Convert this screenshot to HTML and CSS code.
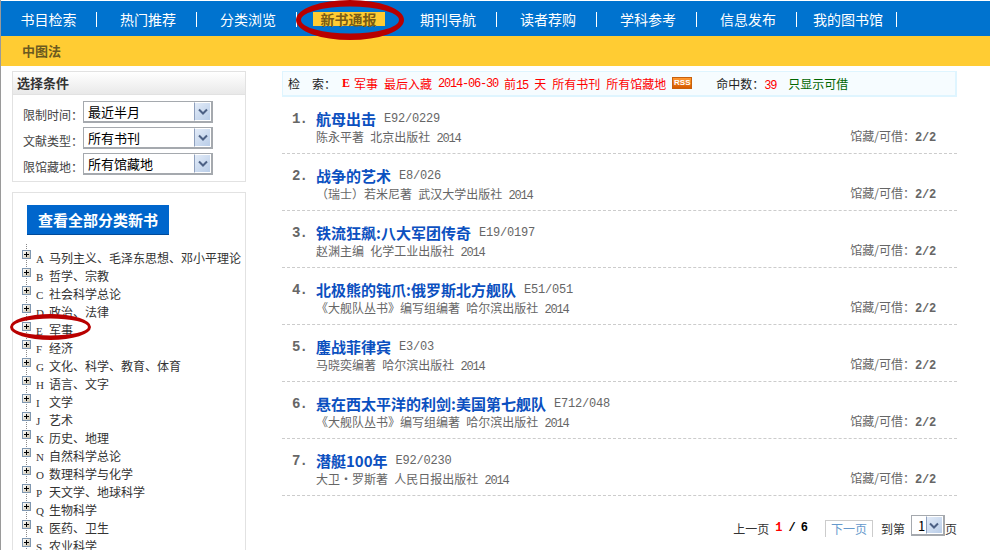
FILE: index.html
```html
<!DOCTYPE html>
<html lang="zh-CN">
<head>
<meta charset="utf-8">
<title>新书通报</title>
<link rel="stylesheet" href="styles.css">
</head>
<body>
<div class="page">
  <nav class="nav">
    <a class="nav-item">书目检索</a>
    <a class="nav-item">热门推荐</a>
    <a class="nav-item">分类浏览</a>
    <a class="nav-item nav-active"><span>新书通报</span></a>
    <a class="nav-item">期刊导航</a>
    <a class="nav-item">读者荐购</a>
    <a class="nav-item">学科参考</a>
    <a class="nav-item">信息发布</a>
    <a class="nav-item">我的图书馆</a>
  </nav>
  <div class="subnav"><b>中图法</b></div>
  <div class="main">
    <aside class="side">
      <section class="panel filter">
        <h3 class="panel-head">选择条件</h3>
        <div class="filter-body">
          <div class="filter-row"><label>限制时间：</label><div class="select"><span class="select-text">最近半月</span><span class="select-arrow"><svg width="10" height="7" viewBox="0 0 10 7"><path d="M1 1.5 5 5.5 9 1.5" fill="none" stroke="#4d6185" stroke-width="2"/></svg></span></div></div>
          <div class="filter-row"><label>文献类型：</label><div class="select"><span class="select-text">所有书刊</span><span class="select-arrow"><svg width="10" height="7" viewBox="0 0 10 7"><path d="M1 1.5 5 5.5 9 1.5" fill="none" stroke="#4d6185" stroke-width="2"/></svg></span></div></div>
          <div class="filter-row"><label>限馆藏地：</label><div class="select"><span class="select-text">所有馆藏地</span><span class="select-arrow"><svg width="10" height="7" viewBox="0 0 10 7"><path d="M1 1.5 5 5.5 9 1.5" fill="none" stroke="#4d6185" stroke-width="2"/></svg></span></div></div>
        </div>
      </section>
      <section class="panel cats">
        <a class="all-btn">查看全部分类新书</a>
        <ul class="tree">
          <li><i class="plus"></i><span class="let">A</span>马列主义、毛泽东思想、邓小平理论</li>
          <li><i class="plus"></i><span class="let">B</span>哲学、宗教</li>
          <li><i class="plus"></i><span class="let">C</span>社会科学总论</li>
          <li><i class="plus"></i><span class="let">D</span>政治、法律</li>
          <li><i class="plus"></i><span class="let">E</span>军事</li>
          <li><i class="plus"></i><span class="let">F</span>经济</li>
          <li><i class="plus"></i><span class="let">G</span>文化、科学、教育、体育</li>
          <li><i class="plus"></i><span class="let">H</span>语言、文字</li>
          <li><i class="plus"></i><span class="let">I</span>文学</li>
          <li><i class="plus"></i><span class="let">J</span>艺术</li>
          <li><i class="plus"></i><span class="let">K</span>历史、地理</li>
          <li><i class="plus"></i><span class="let">N</span>自然科学总论</li>
          <li><i class="plus"></i><span class="let">O</span>数理科学与化学</li>
          <li><i class="plus"></i><span class="let">P</span>天文学、地球科学</li>
          <li><i class="plus"></i><span class="let">Q</span>生物科学</li>
          <li><i class="plus"></i><span class="let">R</span>医药、卫生</li>
          <li><i class="plus"></i><span class="let">S</span>农业科学</li>
        </ul>
      </section>
    </aside>
    <main class="results">
      <div class="search-bar">
        <span class="sb-label">检　索：</span>
        <span class="red let-red">E</span><span class="red">军事</span><span class="red">最后入藏</span><span class="red num">2014-06-30</span><span class="red">前<span class="num">15</span> 天</span><span class="red">所有书刊</span><span class="red">所有馆藏地</span>
        <span class="rss">RSS</span>
        <span class="sb-hit">命中数：<span class="red num">39</span></span>
        <span class="sb-green">只显示可借</span>
      </div>
      <ol class="list">
        <li class="item"><span class="idx">1.</span><div class="info"><div class="head"><a class="title">航母出击</a><span class="call">E92/0229</span></div><div class="pub">陈永平著 北京出版社 <span class="num">2014</span></div></div><div class="avail">馆藏/可借：<b class="frac">2/2</b></div></li>
        <li class="item"><span class="idx">2.</span><div class="info"><div class="head"><a class="title">战争的艺术</a><span class="call">E8/026</span></div><div class="pub">（瑞士）若米尼著 武汉大学出版社 <span class="num">2014</span></div></div><div class="avail">馆藏/可借：<b class="frac">2/2</b></div></li>
        <li class="item"><span class="idx">3.</span><div class="info"><div class="head"><a class="title">铁流狂飙:八大军团传奇</a><span class="call">E19/0197</span></div><div class="pub">赵渊主编 化学工业出版社 <span class="num">2014</span></div></div><div class="avail">馆藏/可借：<b class="frac">2/2</b></div></li>
        <li class="item"><span class="idx">4.</span><div class="info"><div class="head"><a class="title">北极熊的钝爪:俄罗斯北方舰队</a><span class="call">E51/051</span></div><div class="pub">《大舰队丛书》编写组编著 哈尔滨出版社 <span class="num">2014</span></div></div><div class="avail">馆藏/可借：<b class="frac">2/2</b></div></li>
        <li class="item"><span class="idx">5.</span><div class="info"><div class="head"><a class="title">鏖战菲律宾</a><span class="call">E3/03</span></div><div class="pub">马晓奕编著 哈尔滨出版社 <span class="num">2014</span></div></div><div class="avail">馆藏/可借：<b class="frac">2/2</b></div></li>
        <li class="item"><span class="idx">6.</span><div class="info"><div class="head"><a class="title">悬在西太平洋的利剑:美国第七舰队</a><span class="call">E712/048</span></div><div class="pub">《大舰队丛书》编写组编著 哈尔滨出版社 <span class="num">2014</span></div></div><div class="avail">馆藏/可借：<b class="frac">2/2</b></div></li>
        <li class="item"><span class="idx">7.</span><div class="info"><div class="head"><a class="title">潜艇100年</a><span class="call">E92/0230</span></div><div class="pub">大卫·罗斯著 人民日报出版社 <span class="num">2014</span></div></div><div class="avail">馆藏/可借：<b class="frac">2/2</b></div></li>
      </ol>
      <div class="pager">
        <span>上一页</span>
        <b class="pg-cur">1</b><b class="pg-sep">/</b><b class="pg-tot">6</b>
        <a class="pg-next">下一页</a>
        <span class="pg-to">到第</span>
        <div class="select select-small"><span class="select-text">1</span><span class="select-arrow"><svg width="10" height="7" viewBox="0 0 10 7"><path d="M1 1.5 5 5.5 9 1.5" fill="none" stroke="#4d6185" stroke-width="2"/></svg></span></div><span>页</span>
      </div>
    </main>
  </div>
  <svg class="ring ring-nav" width="108" height="40" viewBox="0 0 108 40"><path fill="#b80000" fill-rule="evenodd" d="M0 20a54 20 0 1 0 108 0a54 20 0 1 0-108 0ZM5 20a49 13.5 0 1 0 98 0a49 13.5 0 1 0-98 0Z"/></svg>
  <svg class="ring ring-tree" width="81" height="26" viewBox="0 0 81 26"><path fill="#b80000" fill-rule="evenodd" d="M0 13a40.500 13 0 1 0 81 0a40.500 13 0 1 0-81 0ZM3 13a37.500 8.500 0 1 0 75 0a37.500 8.500 0 1 0-75 0Z"/></svg>
</div>
</body>
</html>
```
FILE: styles.css
```css
* { box-sizing: border-box; }
html, body { margin: 0; padding: 0; background: #fff; }
body { font-family: "Noto Sans CJK SC", "Liberation Sans", sans-serif; font-size: 12px; color: #333; }
ul, ol { list-style: none; margin: 0; padding: 0; }
h3 { margin: 0; }

.page { position: relative; width: 990px; height: 550px; overflow: hidden; padding-top: 1px; border-left: 1px solid #9a9a9a; }

.nav { display: flex; height: 35px; background: #0073cf; }
.nav-item { flex: none; width: 97px; height: 15px; margin: 11px 3px 0 0; border-right: 1px solid #fff; text-align: center; color: #fff; font-size: 14px; line-height: 15px; }
.nav-item:first-child { width: 96px; }
.nav-active { border-right: 0; }
.nav-active span { display: inline-block; width: 72px; height: 14px; background: #ffcc33; color: #7a5c16; font-weight: 700; line-height: 14px; }

.subnav { height: 30px; background: #ffcc33; padding-left: 21px; line-height: 30px; font-size: 13px; color: #6b5a20; }

.main { display: flex; padding: 5px 0 0 11px; }
.side { flex: none; width: 234px; }
.results { flex: none; width: 675px; margin-left: 36px; }

.panel { border: 1px solid #e2e2e2; background: #fff; }
.filter { height: 111px; }
.panel-head { height: 23px; padding-left: 4px; background: linear-gradient(#ffffff, #e9e9e9); border-bottom: 1px solid #e2e2e2; font-size: 13px; line-height: 22px; color: #333; font-weight: 700; }
.filter-body { padding: 6px 0 0 10px; display: flex; flex-direction: column; gap: 4px; }
.filter-row { display: flex; align-items: center; height: 22px; }
.filter-row label { flex: none; width: 60px; font-size: 12px; color: #444; padding-top: 4px; }

.select { display: flex; width: 130px; height: 22px; border: 2px solid #a5a9ae; border-top-width: 1px; border-left-width: 1px; background: #fff; }
.select-text { flex: 1; font-size: 13px; line-height: 19px; color: #000; padding-left: 4px; }
.select-arrow { flex: none; width: 17px; border: 1px solid #fff; border-left-color: #8fa0bd; background: linear-gradient(135deg, #e2ebf8, #b9cde8); display: flex; align-items: center; justify-content: center; }

.cats { margin-top: 10px; height: 400px; padding: 12px 0 0 14px; }
.all-btn { display: block; width: 142px; height: 30px; background: #0066cc; border-bottom: 1px solid #004a99; color: #fff; font-size: 15px; font-weight: 700; line-height: 29px; text-align: center; }
.tree { position: relative; margin: 14px 0 0 -5px; }
.tree::before { content: ""; position: absolute; left: 4px; top: -5px; bottom: 0; border-left: 1px dotted #888; }
.tree li { position: relative; display: flex; align-items: center; height: 18px; font-size: 12px; line-height: 18px; color: #333; white-space: nowrap; }
.plus { position: relative; flex: none; width: 9px; height: 9px; margin: -7px 5px 0 0; border: 1px solid #7f97b0; background: linear-gradient(135deg, #fff, #c9c2ae); }
.plus::before { content: ""; position: absolute; left: 1px; top: 3px; width: 5px; height: 1px; background: #000; }
.plus::after { content: ""; position: absolute; left: 3px; top: 1px; width: 1px; height: 5px; background: #000; }
.let { flex: none; width: 13px; font-family: "Liberation Serif", serif; font-size: 11px; color: #333; padding-top: 1px; }

.search-bar { display: flex; align-items: center; height: 26px; padding-left: 5px; gap: 6px; border: 2px solid #dff5ff; border-width: 1px 2px 2px 1px; background: #f6fcff; font-size: 12px; color: #333; white-space: nowrap; word-spacing: 3.5px; }
.sb-label { width: 48px; color: #222; }
.red { color: #f00; }
.let-red { font-family: "Liberation Serif", serif; font-weight: 700; width: 6px; }
.num { font-family: "Liberation Mono", monospace; letter-spacing: -1.2px; }
.rss { flex: none; width: 20px; height: 12px; margin: -2px 0 0 0; background: linear-gradient(#ff9933, #d65a00); border: 1px solid #c8600c; color: #fff; font: 700 8px/10px "Liberation Sans", sans-serif; text-align: center; }
.sb-hit { margin-left: 18px; color: #222; }
.sb-green { margin-left: 6px; color: #006600; }

.item { display: flex; height: 57px; padding: 12px 21px 0 10px; border-bottom: 1px dashed #ccc; }
.idx { flex: none; width: 24px; font-family: "Liberation Mono", monospace; font-size: 14px; font-weight: 700; color: #666; line-height: 21px; letter-spacing: -1px; }
.info { flex: 1; min-width: 0; }
.head { height: 20px; display: flex; align-items: center; }
.title { color: #0b50c0; font-size: 15px; font-weight: 700; line-height: 20px; }
.call { margin-left: 8px; font-family: "Liberation Mono", monospace; font-size: 12px; letter-spacing: -.2px; color: #666; }
.pub { color: #666; font-size: 12px; line-height: 14px; margin-top: 1px; word-spacing: 3.5px; }
.avail { align-self: flex-end; margin-bottom: 8px; color: #666; font-size: 12px; line-height: 14px; white-space: nowrap; }
.frac { font-family: "Liberation Mono", monospace; letter-spacing: -.2px; }

.pager { display: flex; align-items: center; justify-content: flex-end; height: 20px; margin-top: 22px; font-size: 12px; color: #333; }
.pg-cur { margin-left: 6px; color: #f00; font-family: "Liberation Mono", monospace; font-size: 12px; }
.pg-sep { margin-left: 6px; color: #000; font-family: "Liberation Mono", monospace; }
.pg-tot { margin-left: 5px; color: #000; font-family: "Liberation Mono", monospace; }
.pg-next { width: 48px; height: 17px; margin-left: 17px; border: 1px solid #ccc; border-bottom: 0; color: #6699cc; text-align: center; line-height: 16px; }
.pg-to { margin-left: 8px; margin-right: 6px; }
.select-small { width: 34px; height: 21px; margin-top: -5px; }
.select-small .select-text { padding-left: 6px; }

.ring { position: absolute; pointer-events: none; }
.ring-nav { left: 295px; top: 0; }
.ring-tree { left: 9px; top: 314px; }
```
